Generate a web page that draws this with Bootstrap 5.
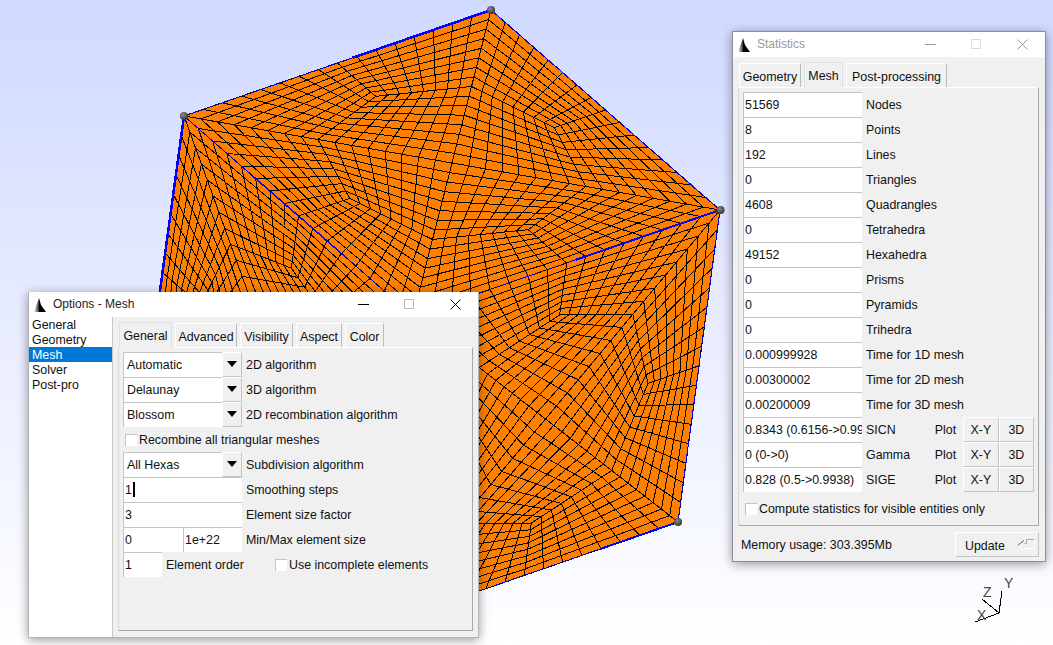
<!doctype html>
<html lang="en">
<head>
  <meta charset="UTF-8">
  <title>Gmsh - Mesh statistics</title>
  <meta name="viewport" content="width=device-width, initial-scale=1">
  <link rel="stylesheet" href="https://cdn.jsdelivr.net/npm/bootstrap@5.3.0/dist/css/bootstrap.min.css">
  <style>
    html, body { height: 100%; }
    body { margin: 0; overflow: hidden; background: #fff; font: 12.4px/15px "Liberation Sans", Arial, sans-serif; color: #111; }
    .viewport { width: 1053px; height: 645px; overflow: hidden; background: linear-gradient(#d0d9ff, #fff); }
    .scene { left: 0; top: 0; }

    .win { background: #f0f0f0; box-shadow: 0 2px 10px rgba(0,0,0,.4); }
    .win-opts { left: 28px; top: 292px; width: 451px; height: 346px; border: 1px solid #b4b4b4; border-top: 0; }
    .win-stat { left: 732px; top: 31px; width: 314px; height: 531px; border: 1px solid #8c8ca0; }
    .titlebar { height: 25px; background: #fff; padding-left: 5px; }
    .titlebar svg.logo { margin-right: 5px; }
    .titlebar .ttl { font: 12px/25px "Liberation Sans", Arial, sans-serif; color: #222; }
    .win-stat .titlebar .ttl { color: #999; }
    .winbtn { width: 46px; height: 25px; }

    .tree { width: 84px; background: #fff; border-right: 1px solid #c8c8c8; border-radius: 0; }
    .tree .list-group-item { border: 0; border-radius: 0; margin-top: 0; padding: 1px 3px 0; height: 15px; font: 12.4px/15px "Liberation Sans", Arial, sans-serif; color: #111; background: transparent; }
    .tree .list-group-item.active { margin-top: 0; border-top-width: 0; background: #0078d7; color: #fff; }
    .tabcol-opts { padding: 0 5px 6px; }
    .tabcol-stat { padding: 0 6px 0 5px; }

    .tabs { border: 0; height: 30px; align-items: flex-end; gap: 3px; padding-left: 1px; flex-wrap: nowrap; }
    .tabs .nav-link { height: 24px; margin: 0; padding: 0; text-align: center; border: 0; border-left: 1px solid #fff; border-top: 1px solid #fff; border-right: 1px solid #bbb; border-radius: 0; background: #f0f0f0; color: #111; font: 12.4px/26px "Liberation Sans", Arial, sans-serif; white-space: nowrap; }
    .tabs .nav-link.active { height: 26px; line-height: 27px; position: relative; z-index: 1; margin-bottom: -1px; background: #f0f0f0; color: #111; }
    .tw-39 { width: 39px; } .tw-46 { width: 46px; } .tw-53 { width: 53px; } .tw-62 { width: 62px; } .tw-101 { width: 101px; }

    .sheet { border: 1px solid; border-color: #fff #a8a8a8 #a8a8a8 #d8d8d8; padding: 4px 4px 0; background: #f0f0f0; }
    .line { height: 25px; }
    .line > span:not(.chk), .chk-row > span:not(.chk) { padding-top: 2px; }
    .lab { padding-left: 4px; white-space: nowrap; }
    .lab-order { width: 111px; }
    .form-control.fld, .fld { display: block; height: 25px; min-height: 0; padding: 0 0 0 1px; border: 0; border-top: 1px solid #c4c4c4; border-left: 1px solid #c4c4c4; border-radius: 0; background: #fff; color: #111; font: 12.4px/24px "Liberation Sans", Arial, sans-serif; box-shadow: none; flex: none; }
    .w-119 { width: 119px; }
    .w-60 { width: 60px; }
    .w-59 { width: 59px; }
    .w-39 { width: 39px; }
    .pick { width: 119px; height: 25px; flex: none; }
    .pick .fld { flex: 1 1 auto; padding-left: 3px; }
    .pick .drop { width: 20px; height: 25px; background: #f0f0f0; border: 1px solid; border-color: #fff #c4c4c4 #c4c4c4 #fff; display: flex; align-items: center; justify-content: center; padding-bottom: 1px; }
    .tri { width: 0; height: 0; border-left: 5.5px solid transparent; border-right: 5.5px solid transparent; border-top: 6px solid #000; }
    .caret-mark { display: inline-block; width: 2px; height: 15px; margin-left: 1px; background: #000; vertical-align: -3px; }
    .chk { width: 12px; height: 12px; margin: 0 2px; background: #fff; border-top: 1px solid #c4c4c4; border-left: 1px solid #c4c4c4; flex: none; }
    .chk-row { height: 25px; margin-top: 4px; }
    .sheet-foot { height: 4px; }
    .pbtn { height: 25px; width: 36px; background: #f0f0f0; border: 1px solid; border-color: #fff #c4c4c4 #c4c4c4 #fff; border-radius: 0; padding: 0; color: #111; font: 12.4px/22px "Liberation Sans", Arial, sans-serif; text-align: center; }
    .pbtn.upd { width: 84px; text-align: left; padding: 2px 0 0 9px; line-height: 22px; }
    .upd-arrow { right: 2px; top: 5px; }
    .plot-lab { width: 29px; }
    .statval { width: 74px; padding-left: 4px; white-space: nowrap; }
    .membar { padding: 1px 0 0 3px; }
    .mem-txt { padding-top: 2px; }
    .axl { font: 14px "Liberation Sans", Arial, sans-serif; fill: #444; }
  </style>
</head>
<body>
<div class="viewport position-relative">
  <svg id="scene" class="scene position-absolute" width="1053" height="645" viewBox="0 0 1053 645">
    <defs>
      <radialGradient id="ball" cx=".4" cy=".35" r=".7"><stop offset="0" stop-color="#8a8a8a"/><stop offset="1" stop-color="#2e2e2e"/></radialGradient>
      <linearGradient id="sail" x1="0" x2="1" y1="0" y2="0"><stop offset="0" stop-color="#f4f4f4"/><stop offset="1" stop-color="#333"/></linearGradient>
    </defs>
    <path id="faces" fill="#ff7f00"/>
    <path id="wire" fill="none" stroke="#000" stroke-width="1" shape-rendering="crispEdges"/>
    <g id="edges" fill="none" stroke="#0000ff" shape-rendering="crispEdges"></g>
    <g fill="url(#ball)">
      <circle cx="184" cy="116" r="4"/><circle cx="491" cy="10" r="4"/><circle cx="720.5" cy="210" r="4"/><circle cx="678" cy="522" r="4"/>
    </g>
    <path d="M999 613L1002 591M999 613L982 599M999 613L975 622" stroke="#000" fill="none" shape-rendering="crispEdges"/>
    <text class="axl" x="1004" y="588">Y</text>
    <text class="axl" x="983" y="597">Z</text>
    <text class="axl" x="977" y="620">X</text>
  </svg>

  <!-- Options window -->
  <div class="win win-opts position-absolute d-flex flex-column">
    <div class="titlebar d-flex align-items-center flex-shrink-0">
      <svg class="logo" width="14" height="16" viewBox="0 0 14 16"><path d="M5 1V15H0Z" fill="url(#sail)"/><path d="M5 1L7 8L12 15H5Z" fill="#000"/></svg>
      <span class="ttl flex-grow-1">Options - Mesh</span>
      <span class="winbtn d-flex align-items-center justify-content-center"><svg width="11" height="11"><path d="M0 5.5H11" stroke="#000"/></svg></span>
      <span class="winbtn d-flex align-items-center justify-content-center"><svg width="11" height="11"><rect x=".5" y=".5" width="9" height="9" fill="none" stroke="#bbb"/></svg></span>
      <span class="winbtn d-flex align-items-center justify-content-center"><svg width="11" height="11"><path d="M.5 .5L10.5 10.5M10.5 .5L.5 10.5" stroke="#000"/></svg></span>
    </div>
    <div class="d-flex flex-grow-1">
      <div class="list-group tree flex-shrink-0">
        <a class="list-group-item">General</a>
        <a class="list-group-item">Geometry</a>
        <a class="list-group-item active">Mesh</a>
        <a class="list-group-item">Solver</a>
        <a class="list-group-item">Post-pro</a>
      </div>
      <div class="d-flex flex-column flex-grow-1 tabcol-opts">
        <ul class="nav nav-tabs tabs">
          <li class="nav-item"><a class="nav-link tw-53 active">General</a></li>
          <li class="nav-item"><a class="nav-link tw-62">Advanced</a></li>
          <li class="nav-item"><a class="nav-link tw-53">Visibility</a></li>
          <li class="nav-item"><a class="nav-link tw-46">Aspect</a></li>
          <li class="nav-item"><a class="nav-link tw-39">Color</a></li>
        </ul>
        <div class="sheet flex-grow-1">
          <div class="line d-flex align-items-center"><div class="pick d-flex"><div class="fld">Automatic</div><div class="drop"><span class="tri"></span></div></div><span class="lab">2D algorithm</span></div>
          <div class="line d-flex align-items-center"><div class="pick d-flex"><div class="fld">Delaunay</div><div class="drop"><span class="tri"></span></div></div><span class="lab">3D algorithm</span></div>
          <div class="line d-flex align-items-center"><div class="pick d-flex"><div class="fld">Blossom</div><div class="drop"><span class="tri"></span></div></div><span class="lab">2D recombination algorithm</span></div>
          <div class="line d-flex align-items-center"><span class="chk"></span><span>Recombine all triangular meshes</span></div>
          <div class="line d-flex align-items-center"><div class="pick d-flex"><div class="fld">All Hexas</div><div class="drop"><span class="tri"></span></div></div><span class="lab">Subdivision algorithm</span></div>
          <div class="line d-flex align-items-center"><div class="fld w-119">1<span class="caret-mark"></span></div><span class="lab">Smoothing steps</span></div>
          <div class="line d-flex align-items-center"><input class="form-control fld w-119" value="3"><span class="lab">Element size factor</span></div>
          <div class="line d-flex align-items-center"><input class="form-control fld w-60" value="0"><input class="form-control fld w-59" value="1e+22"><span class="lab">Min/Max element size</span></div>
          <div class="line d-flex align-items-center"><input class="form-control fld w-39" value="1"><span class="lab lab-order">Element order</span><span class="chk"></span><span>Use incomplete elements</span></div>
        </div>
      </div>
    </div>
  </div>

  <!-- Statistics window -->
  <div class="win win-stat position-absolute d-flex flex-column">
    <div class="titlebar d-flex align-items-center flex-shrink-0">
      <svg class="logo" width="14" height="16" viewBox="0 0 14 16"><path d="M5 1V15H0Z" fill="url(#sail)"/><path d="M5 1L7 8L12 15H5Z" fill="#000"/></svg>
      <span class="ttl flex-grow-1">Statistics</span>
      <span class="winbtn d-flex align-items-center justify-content-center"><svg width="11" height="11"><path d="M0 5.5H11" stroke="#999"/></svg></span>
      <span class="winbtn d-flex align-items-center justify-content-center"><svg width="11" height="11"><rect x=".5" y=".5" width="9" height="9" fill="none" stroke="#ddd"/></svg></span>
      <span class="winbtn d-flex align-items-center justify-content-center"><svg width="11" height="11"><path d="M.5 .5L10.5 10.5M10.5 .5L.5 10.5" stroke="#999"/></svg></span>
    </div>
    <div class="d-flex flex-column flex-grow-1 tabcol-stat">
      <ul class="nav nav-tabs tabs">
        <li class="nav-item"><a class="nav-link tw-62">Geometry</a></li>
        <li class="nav-item"><a class="nav-link tw-39 active">Mesh</a></li>
        <li class="nav-item"><a class="nav-link tw-101">Post-processing</a></li>
      </ul>
      <div class="sheet">
        <div id="statRows"></div>
        <div class="d-flex align-items-center chk-row"><span class="chk"></span><span>Compute statistics for visible entities only</span></div>
        <div class="sheet-foot"></div>
      </div>
      <div class="d-flex align-items-center justify-content-between flex-grow-1 membar">
        <span class="mem-txt">Memory usage: 303.395Mb</span>
        <button class="pbtn upd position-relative" type="button">Update
          <svg class="upd-arrow position-absolute" width="20" height="15" viewBox="0 0 20 15" fill="none"><path d="M1.5 7.5L8 2.5" stroke="#666"/><path d="M8.5 5.5H10.5V1.5H18.5" stroke="#aaa"/><path d="M18.5 1.5V10.5H8.5V13L1.5 7.5" stroke="#fff"/></svg>
        </button>
      </div>
    </div>
  </div>
</div>

<script src="https://cdn.jsdelivr.net/npm/bootstrap@5.3.0/dist/js/bootstrap.bundle.min.js"></script>
<script>
// statistics table
const rows = [
  ['51569', 'Nodes'], ['8', 'Points'], ['192', 'Lines'], ['0', 'Triangles'], ['4608', 'Quadrangles'],
  ['0', 'Tetrahedra'], ['49152', 'Hexahedra'], ['0', 'Prisms'], ['0', 'Pyramids'], ['0', 'Trihedra'],
  ['0.000999928', 'Time for 1D mesh'], ['0.00300002', 'Time for 2D mesh'], ['0.00200009', 'Time for 3D mesh'],
  ['0.8343 (0.6156-&gt;0.9999)', 'SICN', 1], ['0 (0-&gt;0)', 'Gamma', 1], ['0.828 (0.5-&gt;0.9938)', 'SIGE', 1]
];
document.getElementById('statRows').innerHTML = rows.map(r => `
  <div class="line d-flex align-items-center">
    <input class="form-control fld w-119" value="${r[0]}">
    ${r[2] ? `<span class="statval">${r[1]}</span><span class="plot-lab">Plot</span>
      <button class="pbtn" type="button">X-Y</button><button class="pbtn" type="button">3D</button>`
      : `<span class="lab">${r[1]}</span>`}
  </div>`).join('');

// cube mesh: every face is cut in 4 triangles, every triangle in 3 patches of 8x8 quads
const A = [184, 116], B = [491, 10], C = [720, 210], D = [413, 316], G = [678, 522], E = [370, 629], F = [141, 429];

function homography(p0, p1, p2, p3) {
  const dx1 = p1[0] - p2[0], dx2 = p3[0] - p2[0], sx = p0[0] - p1[0] + p2[0] - p3[0];
  const dy1 = p1[1] - p2[1], dy2 = p3[1] - p2[1], sy = p0[1] - p1[1] + p2[1] - p3[1];
  const det = dx1 * dy2 - dx2 * dy1;
  const g = (sx * dy2 - dx2 * sy) / det, h = (dx1 * sy - sx * dy1) / det;
  const a = p1[0] - p0[0] + g * p1[0], b = p3[0] - p0[0] + h * p3[0];
  const d = p1[1] - p0[1] + g * p1[1], e = p3[1] - p0[1] + h * p3[1];
  return (u, v) => {
    const w = g * u + h * v + 1;
    return [(a * u + b * v + p0[0]) / w, (d * u + e * v + p0[1]) / w];
  };
}
const mid = (p, q) => [(p[0] + q[0]) / 2, (p[1] + q[1]) / 2];
const N = 8;
let wire = '';
function patch(map, a, b, c, d) {
  const pt = (s, t) => map(
    (1 - s) * (1 - t) * a[0] + s * (1 - t) * b[0] + s * t * c[0] + (1 - s) * t * d[0],
    (1 - s) * (1 - t) * a[1] + s * (1 - t) * b[1] + s * t * c[1] + (1 - s) * t * d[1]);
  for (let i = 0; i <= N; i++) {
    let l1 = '', l2 = '';
    for (let j = 0; j <= N; j++) {
      const p = pt(i / N, j / N), q = pt(j / N, i / N);
      l1 += (j ? 'L' : 'M') + p[0].toFixed(1) + ' ' + p[1].toFixed(1);
      l2 += (j ? 'L' : 'M') + q[0].toFixed(1) + ' ' + q[1].toFixed(1);
    }
    wire += l1 + l2;
  }
}
function face(p0, p1, p2, p3) {
  const map = homography(p0, p1, p2, p3);
  const cs = [[0, 0], [1, 0], [1, 1], [0, 1]], ctr = [.5, .5];
  for (let k = 0; k < 4; k++) {
    const a = cs[k], b = cs[(k + 1) % 4];
    const g = [(a[0] + b[0] + ctr[0]) / 3, (a[1] + b[1] + ctr[1]) / 3];
    const ab = mid(a, b), bc = mid(b, ctr), ca = mid(ctr, a);
    patch(map, a, ab, g, ca);
    patch(map, b, bc, g, ab);
    patch(map, ctr, ca, g, bc);
  }
}
face(A, B, C, D); face(D, C, G, E); face(F, A, D, E);
document.getElementById('wire').setAttribute('d', wire);
const poly = pts => 'M' + pts.map(p => p.join(' ')).join('L') + 'Z';
document.getElementById('faces').setAttribute('d', poly([A, B, C, G, E, F]));

// geometry edges, half hidden in the orange like in the real view
const edge = (p, q, w, dash) => `<path d="M${p[0]} ${p[1]}L${q[0]} ${q[1]}" stroke-width="${w}"${dash ? ` stroke-dasharray="${dash}"` : ''}/>`;
const at = (p, q, t) => [p[0] + (q[0] - p[0]) * t, p[1] + (q[1] - p[1]) * t];
document.getElementById('edges').innerHTML = [
  edge(A, F, 2.5),
  edge(B, at(B, A, .45), 2.5),
  edge(at(B, A, .45), A, 1.2, '3 2'),
  edge(B, C, 1.2, '3 1'),
  edge(C, G, 1.2, '5 1'),
  edge(G, at(G, E, .25), 2),
  edge(at(G, E, .25), at(G, E, .6), 1.2, '4 2'),
  edge(C, at(C, D, .47), 2),
  edge(at(C, D, .47), D, 1, '2 3'),
  edge(A, at(A, D, .3), 1, '3 2'),
  edge(at(A, D, .3), at(A, D, .7), 1.5),
  edge(at(A, D, .7), D, 1, '3 2')
].join('');
</script>
</body>
</html>
